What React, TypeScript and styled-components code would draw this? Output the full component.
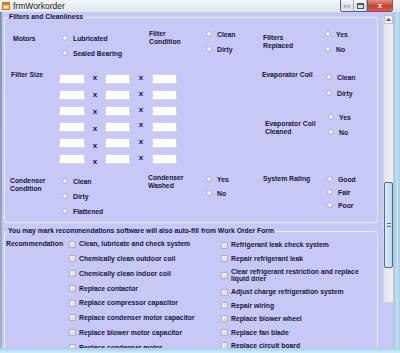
import React from 'react';
import styled, { createGlobalStyle } from 'styled-components';

const Global = createGlobalStyle`
  html, body { margin: 0; padding: 0; background: #ffffff; }
  body { font-family: "Liberation Sans", Arial, sans-serif; }
  #root { width: 400px; height: 353px; overflow: hidden; }
`;

const INK = '#16163a';

const Window = styled.div`
  width: 400px;
  height: 353px;
  display: flex;
  flex-direction: column;
  overflow: hidden;
  background: #c4d8ea;
`;

const TitleBar = styled.div`
  height: 12px;
  flex: none;
  display: flex;
  align-items: flex-start;
  padding-left: 2px;
  background: linear-gradient(#f4f6f9, #dfe6ee);
`;

const IconBox = styled.span`
  width: 8px;
  height: 8px;
  margin-top: 2px;
  display: flex;
  flex: none;
`;

const TitleText = styled.span`
  flex: 1;
  margin-left: 3px;
  font-size: 8.5px;
  line-height: 12px;
  color: #1c1c1c;
`;

const Controls = styled.div`
  display: flex;
  height: 12px;
  margin-right: 7px;
  border: 1px solid #56667a;
  border-top: none;
  border-radius: 0 0 3px 3px;
  overflow: hidden;
  box-sizing: border-box;
`;

const CtrlBtn = styled.div<{ $w: number; $close?: boolean }>`
  width: ${(p) => p.$w}px;
  display: flex;
  align-items: center;
  justify-content: center;
  box-sizing: border-box;
  border-left: ${(p) => (p.$close ? '1px solid #56667a' : 'none')};
  border-right: ${(p) => (p.$close ? 'none' : '1px solid #aab4c0')};
  background: ${(p) =>
    p.$close
      ? 'linear-gradient(#e59080, #c7402e 55%, #d0604c)'
      : 'linear-gradient(#f6f8fa, #d6dde6 55%, #e4e9ef)'};
  color: #fff;
  font-size: 8px;
  font-weight: bold;
  line-height: 11px;
`;

const Middle = styled.div`
  flex: 1;
  min-height: 0;
  display: flex;
`;

const LeftFrame = styled.div`
  width: 2px;
  flex: none;
  background: linear-gradient(#7e95b6, #9ab2cc);
`;

const Client = styled.div`
  flex: 1;
  min-width: 0;
  background: #c8c8f8;
  padding: 1px 5px 0 1px;
  overflow: hidden;
  display: flex;
  flex-direction: column;
`;

const ScrollColumn = styled.div`
  width: 10px;
  flex: none;
  padding-top: 3px;
  background: #c8c8f8;
`;

const ScrollBar = styled.div`
  height: 287px;
  display: flex;
  flex-direction: column;
  background: linear-gradient(90deg, #e4e4e8, #f2f2f4);
  box-sizing: border-box;
  border-left: 1px solid #d6d6de;
`;

const ArrowBtn = styled.div`
  height: 9px;
  flex: none;
  display: flex;
  align-items: center;
  justify-content: center;
  box-sizing: border-box;
  border: 1px solid #c4c4c8;
  background: #f0f0f2;
`;

const Thumb = styled.div<{ $offset: number }>`
  margin-top: ${(p) => p.$offset}px;
  height: 86px;
  box-sizing: border-box;
  border: 1px solid #5c6a78;
  border-radius: 2px;
  background: linear-gradient(90deg, #d6eef9, #b4dcef);
  display: flex;
  align-items: center;
  justify-content: center;
`;

const Grip = styled.div`
  width: 4px;
  height: 4px;
  border-top: 1px solid #5c7080;
  border-bottom: 1px solid #5c7080;
  box-sizing: border-box;
`;

const RightFrame = styled.div`
  width: 7px;
  flex: none;
  background: linear-gradient(90deg, #9fc4e0, #c5e0f0 60%, #a8cce6);
`;

const BottomFrame = styled.div`
  height: 5px;
  flex: none;
  background: linear-gradient(#a6d0ea, #d2ecf8);
`;

/* ---------- group boxes ---------- */

const Group = styled.fieldset<{ $mt: number }>`
  margin: ${(p) => p.$mt}px 0 0 1px;
  padding: 0;
  min-width: 0;
  border: 1px solid #ededf8;
  border-radius: 3px;
  flex: none;
`;

const Legend = styled.legend<{ $indent: number }>`
  margin-left: ${(p) => p.$indent}px;
  padding: 0 1px;
  font-size: 6.8px;
  line-height: 8px;
  font-weight: bold;
  color: ${INK};
  white-space: nowrap;
`;

const GroupBody = styled.div`
  padding: 9px 0 0 5px;
`;

const Block = styled.div<{ $h: number }>`
  display: grid;
  grid-template-columns: 49px 89px 57px 57px 62px 1fr;
  align-items: start;
  height: ${(p) => p.$h}px;
`;

const Cell = styled.div<{ $top?: number; $left?: number; $span?: number; $gap?: number }>`
  grid-column: span ${(p) => p.$span ?? 1};
  padding: ${(p) => p.$top ?? 0}px 0 0 ${(p) => p.$left ?? 0}px;
  display: flex;
  flex-direction: column;
  gap: ${(p) => p.$gap ?? 0}px;
`;

const Label = styled.div<{ $left?: number }>`
  padding-left: ${(p) => p.$left ?? 0}px;
  font-size: 6.8px;
  line-height: 8px;
  font-weight: bold;
  color: ${INK};
  white-space: nowrap;
`;

const RadioStack = styled.div<{ $gap: number; $left?: number }>`
  display: flex;
  flex-direction: column;
  gap: ${(p) => p.$gap}px;
  padding-left: ${(p) => p.$left ?? 0}px;
`;

const RadioRow = styled.div`
  display: flex;
  align-items: center;
  gap: 5px;
  height: 8px;
  font-size: 6.8px;
  font-weight: bold;
  color: ${INK};
  white-space: nowrap;
`;

const RadioDot = styled.span`
  width: 6px;
  height: 6px;
  flex: none;
  box-sizing: border-box;
  border-radius: 50%;
  border: 1px solid #b8b8c6;
  background: radial-gradient(circle at 40% 40%, #fbfbfc, #d4d4de);
`;

const SizeGrid = styled.div`
  display: grid;
  grid-template-columns: 26px 20px 25px 22px 25px;
  grid-auto-rows: 10px;
  row-gap: 6px;
  align-items: start;
`;

const TextBox = styled.div`
  height: 10px;
  box-sizing: border-box;
  background: #ffffff;
  border: 1px solid #d4d4e4;
`;

const Times = styled.span<{ $shift: number }>`
  margin-top: ${(p) => p.$shift}px;
  text-align: center;
  font-size: 8px;
  line-height: 9px;
  font-weight: bold;
  color: ${INK};
`;

/* ---------- recommendations ---------- */

const RecBody = styled.div`
  display: grid;
  grid-template-columns: 63px 152px 1fr;
  align-items: start;
  padding: 5px 0 0 1px;
`;

const CheckList = styled.div<{ $gap: number; $top?: number }>`
  display: flex;
  flex-direction: column;
  gap: ${(p) => p.$gap}px;
  padding-top: ${(p) => p.$top ?? 0}px;
`;

const CheckRow = styled.div`
  display: flex;
  align-items: center;
  gap: 3px;
  min-height: 8px;
`;

const CheckBox = styled.span`
  width: 7px;
  height: 7px;
  flex: none;
  box-sizing: border-box;
  border: 1px solid #b4b4bc;
  background: linear-gradient(135deg, #f4f4f6, #d6d6dc);
`;

const CheckText = styled.span`
  font-size: 6.8px;
  line-height: 7.5px;
  font-weight: bold;
  color: ${INK};
  white-space: nowrap;
`;

/* ---------- data ---------- */

const Radios = ({ items, gap, left }: { items: string[]; gap: number; left?: number }) => (
  <RadioStack $gap={gap} $left={left}>
    {items.map((t) => (
      <RadioRow key={t}>
        <RadioDot />
        {t}
      </RadioRow>
    ))}
  </RadioStack>
);

const Lines = ({ lines, left }: { lines: string[]; left?: number }) => (
  <Label $left={left}>
    {lines.map((l, i) => (
      <React.Fragment key={l}>
        {i > 0 && <br />}
        {l}
      </React.Fragment>
    ))}
  </Label>
);

const firstShift = [-1, 0, 1, 2, 3, 3];
const secondShift = [-1, -1, -1, -2, -1, -1];

const recLeft = [
  ['Clean, lubricate and check system'],
  ['Chemically clean outdoor coil'],
  ['Chemically clean indoor coil'],
  ['Replace contactor'],
  ['Replace compressor capacitor'],
  ['Replace condenser motor capacitor'],
  ['Replace blower motor capacitor'],
  ['Replace condenser motor'],
];

const recRight = [
  ['Refrigerant leak check system'],
  ['Repair refrigerant leak'],
  ['Clear refrigerant restriction and replace', 'liquid drier'],
  ['Adjust charge refrigeration system'],
  ['Repair wiring'],
  ['Replace blower wheel'],
  ['Replace fan blade'],
  ['Replace circuit board'],
];

const CheckItems = ({ items }: { items: string[][] }) => (
  <>
    {items.map((lines) => (
      <CheckRow key={lines[0]}>
        <CheckBox />
        <CheckText>
          {lines.map((l, i) => (
            <React.Fragment key={l}>
              {i > 0 && <br />}
              {l}
            </React.Fragment>
          ))}
        </CheckText>
      </CheckRow>
    ))}
  </>
);

export default function App() {
  return (
    <>
      <Global />
      <Window>
        <TitleBar>
          <IconBox>
            <svg width="8" height="8" viewBox="0 0 8 8">
              <rect x="0.5" y="0.5" width="7" height="7" fill="#f7c84a" stroke="#c57a12" />
              <rect x="1" y="1" width="6" height="2" fill="#e8792a" />
              <rect x="2" y="4" width="4" height="2" fill="#fff6d0" />
            </svg>
          </IconBox>
          <TitleText>frmWorkorder</TitleText>
          <Controls>
            <CtrlBtn $w={13}>
              <svg width="6" height="4" viewBox="0 0 6 4">
                <rect x="0" y="2" width="6" height="2" fill="#fff" stroke="#4a5868" strokeWidth="0.6" />
              </svg>
            </CtrlBtn>
            <CtrlBtn $w={13}>
              <svg width="7" height="6" viewBox="0 0 7 6">
                <rect x="0.5" y="0.5" width="6" height="5" fill="none" stroke="#4a5868" strokeWidth="1" />
                <rect x="1" y="1" width="5" height="1" fill="#4a5868" />
              </svg>
            </CtrlBtn>
            <CtrlBtn $w={25} $close>
              x
            </CtrlBtn>
          </Controls>
        </TitleBar>

        <Middle>
          <LeftFrame />
          <Client>
            <Group $mt={0}>
              <Legend $indent={3}>Filters and Cleanliness</Legend>
              <GroupBody>
                <Block $h={40}>
                  <Cell $top={5} $left={3}>
                    <Label>Motors</Label>
                  </Cell>
                  <Cell $top={4} $left={3}>
                    <Radios items={['Lubricated', 'Sealed Bearing']} gap={7} />
                  </Cell>
                  <Cell $top={0} $left={1}>
                    <Lines lines={['Filter', 'Condition']} />
                  </Cell>
                  <Cell $top={0} $left={1}>
                    <Radios items={['Clean', 'Dirty']} gap={7} />
                  </Cell>
                  <Cell $top={4} $left={1}>
                    <Lines lines={['Filters', 'Replaced']} />
                  </Cell>
                  <Cell $top={0} $left={1}>
                    <Radios items={['Yes', 'No']} gap={7} />
                  </Cell>
                </Block>

                <Block $h={102}>
                  <Cell $top={1} $left={1}>
                    <Label>Filter Size</Label>
                  </Cell>
                  <Cell $top={4} $span={3}>
                    <SizeGrid>
                      {firstShift.map((s, i) => (
                        <React.Fragment key={i}>
                          <TextBox />
                          <Times $shift={s}>x</Times>
                          <TextBox />
                          <Times $shift={secondShift[i]}>x</Times>
                          <TextBox />
                        </React.Fragment>
                      ))}
                    </SizeGrid>
                  </Cell>
                  <Cell $top={1} $gap={41}>
                    <Label>Evaporator Coil</Label>
                    <Lines lines={['Evaporator Coil', 'Cleaned']} left={3} />
                  </Cell>
                  <Cell $top={3} $gap={16}>
                    <Radios items={['Clean', 'Dirty']} gap={8} left={2} />
                    <Radios items={['Yes', 'No']} gap={7} left={4} />
                  </Cell>
                </Block>

                <Block $h={50}>
                  <Cell $top={5}>
                    <Lines lines={['Condenser', 'Condition']} />
                  </Cell>
                  <Cell $top={5} $left={3}>
                    <Radios items={['Clean', 'Dirty', 'Flattened']} gap={7} />
                  </Cell>
                  <Cell $top={2}>
                    <Lines lines={['Condenser', 'Washed']} />
                  </Cell>
                  <Cell $top={3} $left={1}>
                    <Radios items={['Yes', 'No']} gap={6} />
                  </Cell>
                  <Cell $top={3} $left={1}>
                    <Label>System Rating</Label>
                  </Cell>
                  <Cell $top={3} $left={3}>
                    <Radios items={['Good', 'Fair', 'Poor']} gap={5} />
                  </Cell>
                </Block>
              </GroupBody>
            </Group>

            <Group $mt={4}>
              <Legend $indent={2}>
                You may mark recommendations software will also auto-fill from Work Order Form
              </Legend>
              <RecBody>
                <Label>Recommendation</Label>
                <CheckList $gap={6.8}>
                  <CheckItems items={recLeft} />
                </CheckList>
                <CheckList $gap={5.4} $top={1}>
                  <CheckItems items={recRight} />
                </CheckList>
              </RecBody>
            </Group>
          </Client>
          <ScrollColumn>
            <ScrollBar>
              <ArrowBtn>
                <svg width="5" height="3" viewBox="0 0 5 3">
                  <path d="M0 3 L2.5 0 L5 3 Z" fill="#505a64" />
                </svg>
              </ArrowBtn>
              <Thumb $offset={158}>
                <Grip />
              </Thumb>
            </ScrollBar>
          </ScrollColumn>
          <RightFrame />
        </Middle>
        <BottomFrame />
      </Window>
    </>
  );
}
